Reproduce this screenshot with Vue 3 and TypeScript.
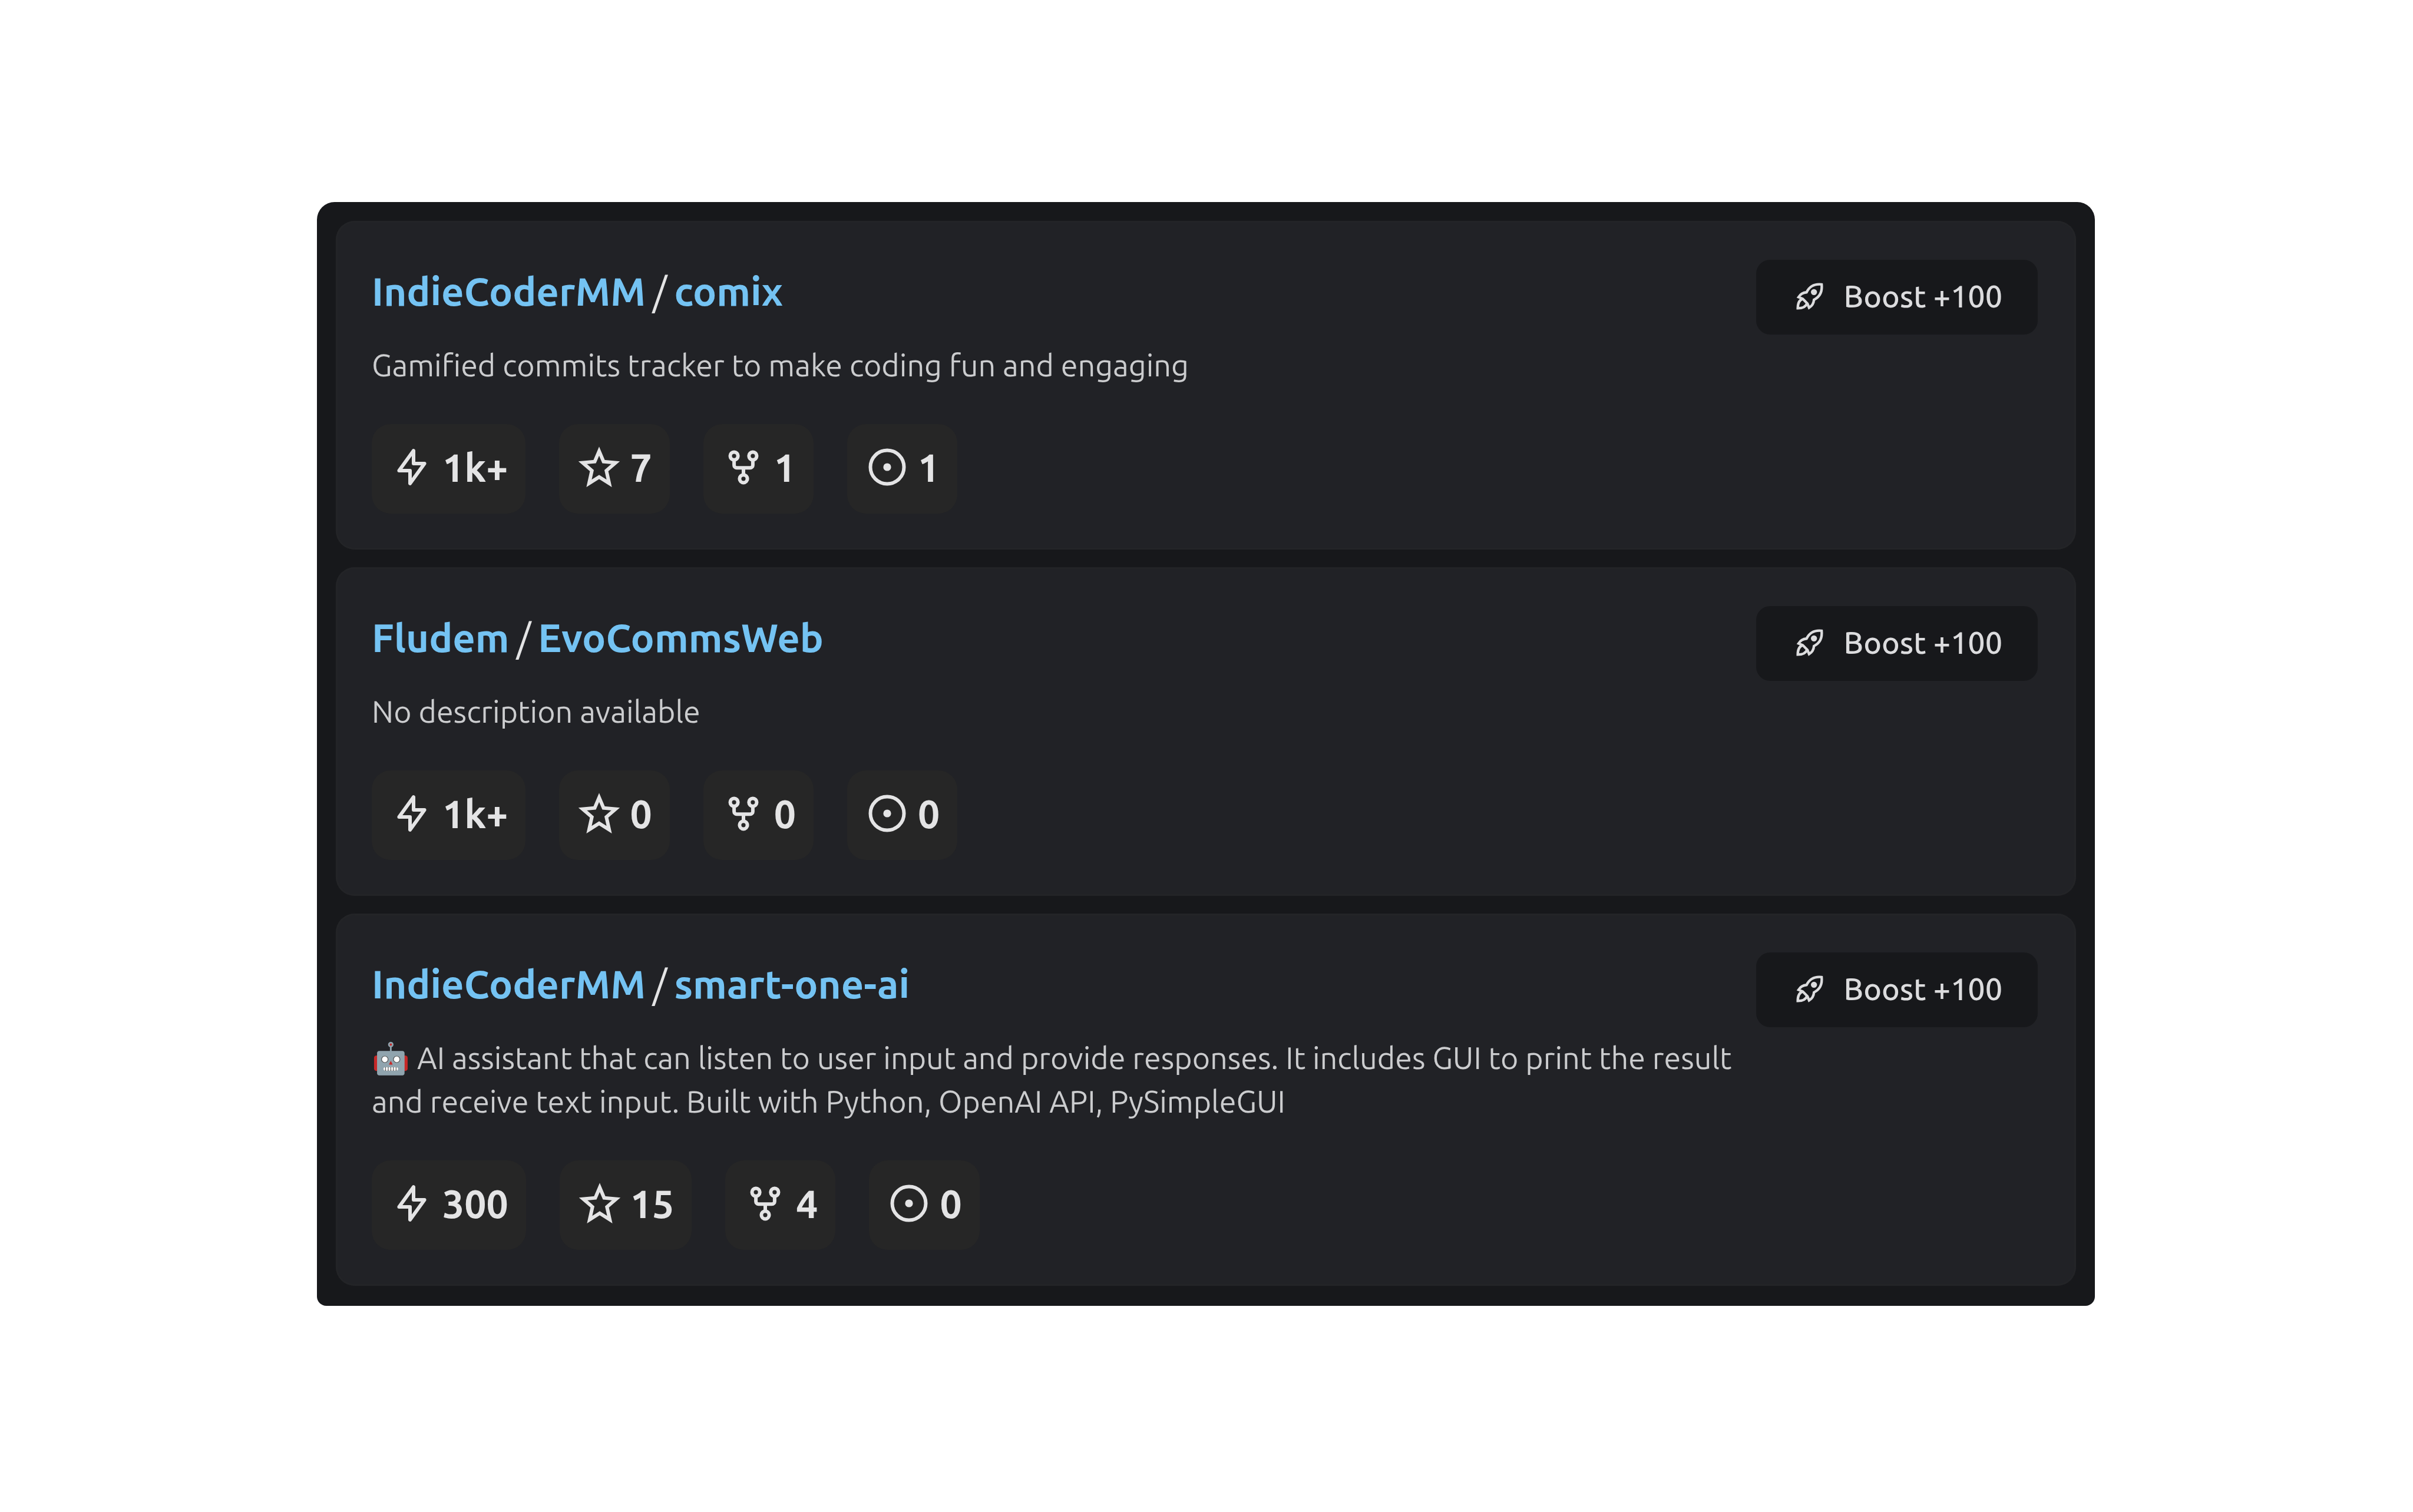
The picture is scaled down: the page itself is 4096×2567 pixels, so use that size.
<script setup lang="ts">
type IconName = 'bolt' | 'star' | 'fork' | 'issue'
interface Stat {
  icon: IconName
  label: string
  value: string
}
interface Repo {
  owner: string
  name: string
  description: string
  stats: Stat[]
}

const stats = (power: string, stars: string, forks: string, issues: string): Stat[] => [
  { icon: 'bolt', label: 'Power', value: power },
  { icon: 'star', label: 'Stars', value: stars },
  { icon: 'fork', label: 'Forks', value: forks },
  { icon: 'issue', label: 'Issues', value: issues },
]

const repos: Repo[] = [
  {
    owner: 'IndieCoderMM',
    name: 'comix',
    description: 'Gamified commits tracker to make coding fun and engaging',
    stats: stats('1k+', '7', '1', '1'),
  },
  {
    owner: 'Fludem',
    name: 'EvoCommsWeb',
    description: 'No description available',
    stats: stats('1k+', '0', '0', '0'),
  },
  {
    owner: 'IndieCoderMM',
    name: 'smart-one-ai',
    description:
      '🤖 AI assistant that can listen to user input and provide responses. It includes GUI to print the result and receive text input. Built with Python, OpenAI API, PySimpleGUI',
    stats: stats('300', '15', '4', '0'),
  },
]
</script>

<template>
  <main class="page">
    <section class="panel" aria-label="Repositories">
      <article v-for="repo in repos" :key="repo.name" class="card">
        <div class="info">
          <h2 class="title">
            <a href="#" class="link">{{ repo.owner }}</a>
            <span class="slash">/</span>
            <a href="#" class="link">{{ repo.name }}</a>
          </h2>
          <p class="description">{{ repo.description }}</p>
          <ul class="stats">
            <li v-for="stat in repo.stats" :key="stat.icon" class="stat" :aria-label="stat.label">
              <svg v-if="stat.icon === 'bolt'" class="icon round" viewBox="0 0 24 24" aria-hidden="true">
                <path d="M13 2.700v7.300h6.200l-8.200 11.300v-7.300H4.800z" />
              </svg>
              <svg v-else-if="stat.icon === 'star'" class="icon" viewBox="0 0 24 24" aria-hidden="true">
                <path d="M12 3l2.500 5.900 6.800.6-5.200 4.500 1.600 7.200-5.700-3.600-5.700 3.600 1.600-7.200L2.700 9.500l6.800-.6z" />
              </svg>
              <svg v-else-if="stat.icon === 'fork'" class="icon" viewBox="0 0 24 24" aria-hidden="true">
                <circle cx="6.700" cy="5.700" r="2.200" />
                <circle cx="17.300" cy="5.700" r="2.200" />
                <circle cx="12" cy="18.600" r="2.200" />
                <path d="M6.700 8v2.900a1.500 1.500 0 0 0 1.500 1.500h7.600a1.500 1.500 0 0 0 1.500-1.500V8M12 12.400v3.900" />
              </svg>
              <svg v-else class="icon" viewBox="0 0 24 24" aria-hidden="true">
                <circle cx="12" cy="12" r="9.500" />
                <circle class="dot" cx="12" cy="12" r="2.200" />
              </svg>
              <span>{{ stat.value }}</span>
            </li>
          </ul>
        </div>
        <button type="button" class="boost">
          <svg class="rocket" viewBox="0 0 24 24" aria-hidden="true">
            <path d="M21.300 2.700c-5.500-.6-9.500 1.500-11.800 6.200-2.700.2-4.900 1.500-6.300 3.800l3.300 1.300 3.700 3.700 1.300 3.300c2.300-1.400 3.600-3.600 3.800-6.300 4.700-2.300 6.600-6.500 6-12z" />
            <path d="M6.500 14c-2.900.9-3.900 3.700-3.900 7.400 3.700 0 6.300-1.100 7.300-3.900" />
            <circle class="dot" cx="15.300" cy="8.700" r="2.400" />
          </svg>
          <span>Boost +100</span>
        </button>
      </article>
    </section>
  </main>
</template>

<style>
body {
  margin: 0;
  background: #fff;
}
</style>

<style scoped>
.page {
  box-sizing: border-box;
  min-height: 100vh;
  padding: 343px 540px 350px 538px;
  background: #fff;
  color: #e4e4e5;
  font-family: Ubuntu, "Noto Sans", sans-serif;
}
.panel {
  display: flex;
  flex-direction: column;
  gap: 30px;
  padding: 32px 32px 34px;
  background: #17181b;
  border-radius: 30px 30px 16px 16px;
}
.card {
  display: flex;
  align-items: flex-start;
  justify-content: space-between;
  gap: 40px;
  padding: 61px 65px 61px 61px;
  background: #212226;
  border-radius: 32px;
  box-shadow: inset 0 0 0 3px #232427;
}
.info {
  flex: 1;
  min-width: 0;
}
.title {
  display: flex;
  gap: 12px;
  margin: 0 0 29px;
  font-size: 67px;
  line-height: 118px;
  font-weight: 600;
}
.link {
  color: #74c3f3;
  text-decoration: none;
}
.slash {
  font-weight: 400;
}
.description {
  margin: 0 0 63px;
  color: #cbccce;
  font-size: 52px;
  line-height: 74px;
}
.stats {
  display: flex;
  gap: 57px;
  margin: 0;
  padding: 0;
  list-style: none;
}
.stat {
  display: flex;
  align-items: center;
  gap: 16px;
  box-sizing: border-box;
  height: 152px;
  padding: 0 30px 6px 32px;
  background: #262626;
  border-radius: 32px;
  font-size: 66px;
  line-height: 72px;
  font-weight: 600;
}
.icon,
.rocket {
  width: 72px;
  height: 72px;
  fill: none;
  stroke: currentColor;
  stroke-width: 2;
}
.round {
  stroke-linejoin: round;
}
.dot {
  fill: currentColor;
  stroke: none;
}
.boost {
  display: flex;
  align-items: center;
  gap: 32px;
  height: 127px;
  margin-top: 5px;
  padding: 0 60px 4px 65px;
  border: 0;
  border-radius: 24px;
  background: #17181b;
  color: #dcdcde;
  font: inherit;
  font-size: 52px;
  font-weight: 500;
}
.rocket {
  width: 52px;
  height: 52px;
}
</style>
